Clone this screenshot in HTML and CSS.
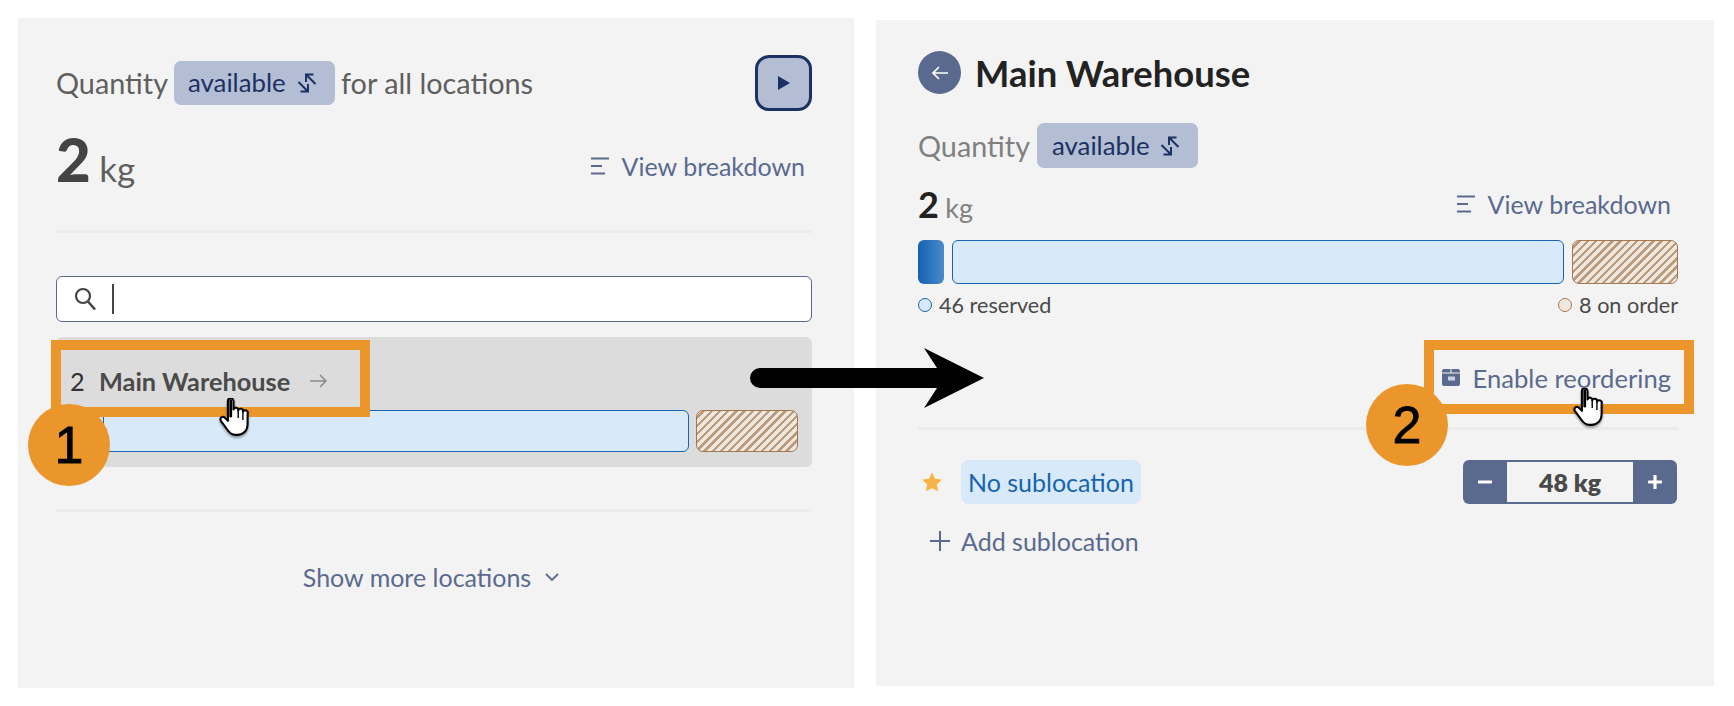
FILE: index.html
```html
<!DOCTYPE html>
<html lang="en">
<head>
<meta charset="utf-8">
<title>Main Warehouse</title>
<link rel="stylesheet" href="styles.css">
</head>
<body>
<svg class="defs" width="0" height="0" aria-hidden="true">
  <symbol id="swap" viewBox="0 0 20 20"><path d="M1.500 9 11 18.500M3.500 18.500H11V11M18.500 11 9 1.500M16.500 1.500H9V9" fill="none" stroke="currentColor" stroke-width="2"/></symbol>
  <symbol id="lines" viewBox="0 0 19 18"><path d="M0 1.500H18M0 9H11M0 16.500H14" fill="none" stroke="#5a6a8f" stroke-width="2"/></symbol>
  <symbol id="hand" viewBox="0 0 32 42">
    <path d="M9.500 3a3 3 0 0 1 6 0V12a2.500 2.500 0 0 1 5 1a2.500 2.500 0 0 1 5 1.500a2.500 2.500 0 0 1 5 2V27c0 8-5 12-11 12h-2c-5 0-7-3-9-6L2 24c-1.800-3 2-5.500 4-3.500L9.500 24Z" fill="#fff" stroke="#000" stroke-width="2.200" stroke-linejoin="round"/>
    <path d="M12.500 2.500V19" fill="none" stroke="#000" stroke-width="3" stroke-linecap="round"/>
    <path d="M20.500 13v8M25.500 15v8" fill="none" stroke="#000" stroke-width="1.500"/>
  </symbol>
</svg>

<main class="stage">
  <section class="panel panel-left">
    <div class="head">
      <div class="qty-line">
        <span class="muted-dark">Quantity</span>
        <span class="chip">available <svg class="swap"><use href="#swap"/></svg></span>
        <span class="muted-dark">for all locations</span>
      </div>
      <button class="play"><svg viewBox="0 0 12 14" class="play-icon"><path d="M0 0 12 7 0 14Z"/></svg></button>
    </div>
    <div class="stat stat-big">
      <div class="stat-value"><span class="num-heavy">2</span> <span class="unit-dark">kg</span></div>
      <a class="link"><svg class="lines"><use href="#lines"/></svg>View breakdown</a>
    </div>
    <div class="rule rule-a"></div>
    <div class="search">
      <svg class="search-icon" viewBox="0 0 22 24"><circle cx="9" cy="9" r="7" fill="none" stroke="#444" stroke-width="2.200"/><path d="M14 14.500 21 22.500" stroke="#444" stroke-width="2.500"/></svg>
      <span class="caret"></span>
    </div>
    <div class="location">
      <div class="loc-name">
        <span class="loc-num">2</span>
        <strong class="loc-title">Main Warehouse</strong>
        <svg class="loc-arrow" viewBox="0 0 17 14"><path d="M0 7H16M10 1l6 6-6 6" fill="none" stroke="#8a8a8a" stroke-width="1.500"/></svg>
      </div>
      <div class="bar bar-small">
        <span class="seg-dark"></span>
        <span class="seg-light"></span>
        <span class="seg-hatch"></span>
      </div>
    </div>
    <div class="rule rule-b"></div>
    <a class="link show-more">Show more locations <svg class="chev" viewBox="0 0 14 9"><path d="M1 1l6 6 6-6" fill="none" stroke="#5a6a8f" stroke-width="1.800"/></svg></a>
  </section>

  <section class="panel panel-right">
    <div class="title-row">
      <span class="back"><svg viewBox="0 0 16 14" class="back-icon"><path d="M16 7H1M7 1 1 7l6 6" fill="none" stroke="#fff" stroke-width="1.600"/></svg></span>
      <h1 class="title">Main Warehouse</h1>
    </div>
    <div class="qty-line qty-right">
      <span class="muted">Quantity</span>
      <span class="chip">available <svg class="swap"><use href="#swap"/></svg></span>
    </div>
    <div class="stat stat-small">
      <div><span class="num-bold">2</span> <span class="unit">kg</span></div>
      <a class="link"><svg class="lines"><use href="#lines"/></svg>View breakdown</a>
    </div>
    <div class="bar bar-large">
      <span class="seg-dark"></span>
      <span class="seg-light"></span>
      <span class="seg-hatch"></span>
    </div>
    <div class="legend">
      <span class="legend-item"><i class="dot dot-blue"></i>46 reserved</span>
      <span class="legend-item"><i class="dot dot-brown"></i>8 on order</span>
    </div>
    <div class="enable-row">
      <a class="link"><svg class="box-icon" viewBox="0 0 18 17"><path d="M2 0h6.500v3.500H0V2a2 2 0 0 1 2-2ZM9.500 0H16a2 2 0 0 1 2 2v1.500H9.500ZM0 4.500H18V15a2 2 0 0 1-2 2H2a2 2 0 0 1-2-2Z" fill="#5a6a8f"/><rect x="6" y="7.500" width="7" height="4" fill="#c9d0df"/></svg>Enable reordering</a>
    </div>
    <div class="rule rule-c"></div>
    <div class="sub-row">
      <div class="sub-left">
        <svg class="star" viewBox="0 0 24 24"><path d="M12 1.500 15.300 8.500 23 9.500 17.400 14.800 18.800 22.500 12 18.800 5.200 22.500 6.600 14.800 1 9.500 8.700 8.500Z" fill="#f6b448" stroke="#f6b448" stroke-linejoin="round"/></svg>
        <span class="sub-chip">No sublocation</span>
      </div>
      <div class="stepper">
        <span class="step-btn"><svg viewBox="0 0 14 14" class="step-icon"><path d="M1 7H13" stroke="#fff" stroke-width="3.200" stroke-linecap="round"/></svg></span>
        <span class="step-val">48 kg</span>
        <span class="step-btn"><svg viewBox="0 0 14 14" class="step-icon"><path d="M1 7H13M7 1V13" stroke="#fff" stroke-width="3.200" stroke-linecap="round"/></svg></span>
      </div>
    </div>
    <a class="link add-row"><svg class="plus" viewBox="0 0 20 20"><path d="M0 10H20M10 0V20" stroke="#5a6a8f" stroke-width="2"/></svg>Add sublocation</a>
  </section>

  <div class="mark mark-one"></div>
  <div class="mark mark-two"></div>
  <svg class="flow-arrow" viewBox="0 0 235 60"><path d="M10 20H187L174 0 234 30 174 60 187 40H10A10 10 0 0 1 10 20Z" fill="#000"/></svg>
  <div class="badge badge-one">1</div>
  <div class="badge badge-two">2</div>
  <svg class="hand hand-one"><use href="#hand"/></svg>
  <svg class="hand hand-two"><use href="#hand"/></svg>
</main>
</body>
</html>
```
FILE: styles.css
```css
* { box-sizing: border-box; }
html, body { margin: 0; padding: 0; background: #fff; }
body { width: 1734px; height: 706px; overflow: hidden; font-family: "Lato", "Liberation Sans", sans-serif; font-size: 25px; color: #4a4a4a; }
.defs { position: absolute; }
.stage { position: relative; display: flex; gap: 22px; padding: 18px 20px 18px 18px; height: 706px; align-items: stretch; }
.panel { background: #f3f3f3; display: flex; flex-direction: column; }
.panel-left { width: 836px; padding: 37px 42px 0 38px; }
.panel-right { width: 838px; margin: 2px 0; padding: 31px 36px 0 42px; }

.head { display: flex; justify-content: space-between; align-items: center; height: 56px; }
.qty-line { display: flex; align-items: center; gap: 6px; line-height: 1; font-size: 28.800px; }
.muted-dark { color: #5f5f5f; }
.muted { color: #808080; }
.chip { display: inline-flex; align-items: center; justify-content: space-between; width: 161px; height: 44px; padding: 0 18px 0 14px; background: #b3bdd3; border-radius: 7px; color: #1b3163; font-size: 25.800px; }
.swap { width: 20px; height: 20px; color: #1b3163; }
.play { width: 57px; height: 56px; padding: 0; border: 3px solid #1b3163; border-radius: 14px; background: #b3bdd3; display: flex; align-items: center; justify-content: center; }
.play-icon { width: 12px; height: 14px; fill: #1b3163; }

.stat { display: flex; justify-content: space-between; align-items: center; }
.stat-big { margin-top: 19px; height: 60px; }
.stat-value { margin-top: -2px; }
.num-heavy { font-size: 60px; font-weight: 900; color: #444; line-height: 1; margin-right: 2px; }
.unit-dark { font-size: 35px; color: #5f5f5f; }
.num-bold { font-size: 36px; font-weight: 700; color: #222; line-height: 1; }
.unit { font-size: 27px; color: #808080; }
.link { display: inline-flex; align-items: center; color: #5a6a8f; white-space: nowrap; }
.lines { width: 19px; height: 18px; margin-right: 12px; }
.stat-big .link { margin: 11px 7px 0 0; }
.stat-small .link { margin: -2px 7px 0 0; }

.rule { height: 3px; background: #ebebeb; }
.rule-a { margin-top: 40px; }
.rule-b { margin-top: 42px; }
.rule-c { margin-top: 33px; }

.search { margin-top: 43px; height: 46px; border: 1px solid #5a6a8f; border-radius: 6px; background: #fff; display: flex; align-items: center; padding-left: 17px; }
.search-icon { width: 22px; height: 24px; }
.caret { width: 2px; height: 30px; background: #444; margin-left: 16px; }

.location { margin-top: 15px; height: 130px; padding: 27px 14px 0; background: #dcdcdc; border-radius: 6px; display: flex; flex-direction: column; }
.loc-name { display: flex; align-items: center; height: 34px; font-size: 25.300px; }
.loc-num { color: #333; width: 29px; }
.loc-title { font-weight: 700; color: #4a4a4a; }
.loc-arrow { width: 17px; height: 14px; margin-left: 20px; }

.bar { display: flex; gap: 7px; }
.bar-small { margin-top: 12px; height: 42px; }
.bar-large { margin-top: 19px; height: 44px; gap: 8px; }
.seg-dark { width: 26px; border-radius: 6px; background: linear-gradient(90deg, #1560b0, #4a8ccb); }
.seg-light { flex: 1; background: #d8e9f9; border: 1px solid #1565b0; border-radius: 6px; }
.seg-hatch { width: 102px; border: 1px solid #a5774f; border-radius: 7px; background: repeating-linear-gradient(135deg, #efe8e0 0 3.500px, #bd9b7d 3.500px 5.800px); }
.bar-large .seg-hatch { width: 106px; }

.show-more { margin-top: 47px; height: 36px; justify-content: center; align-self: stretch; padding-right: 6px; }
.chev { width: 14px; height: 9px; margin-left: 14px; }

.title-row { display: flex; align-items: center; height: 43px; gap: 14px; }
.back { width: 43px; height: 43px; border-radius: 50%; background: #5a6a8f; display: flex; align-items: center; justify-content: center; }
.back-icon { width: 16px; height: 14px; }
.title { margin: 2px 0 0; font-size: 36.400px; font-weight: 700; color: #222; line-height: 1; }
.qty-right { margin-top: 29px; height: 45px; gap: 7px; }
.qty-right .muted { margin-top: 1px; }
.qty-right .chip { height: 45px; padding-left: 15px; }
.stat-small { margin-top: 21px; height: 32px; }

.legend { margin-top: 10px; height: 22px; display: flex; justify-content: space-between; font-size: 21.600px; color: #4a4a4a; }
.legend-item { display: inline-flex; align-items: center; }
.dot { width: 14px; height: 14px; border-radius: 50%; margin-right: 7px; border: 1.500px solid; }
.dot-blue { border-color: #1565b0; background: #d8e9f9; }
.dot-brown { border-color: #a5774f; background: #efe8e0; }

.enable-row { margin-top: 46px; height: 32px; display: flex; justify-content: flex-end; padding-right: 7px; font-size: 25.600px; }
.box-icon { width: 18px; height: 17px; margin: -2px 13px 0 0; }

.sub-row { margin-top: 30px; height: 44px; display: flex; justify-content: space-between; padding-right: 1px; }
.sub-left { display: flex; align-items: center; }
.star { width: 20px; height: 20px; margin: 0 0 0 4px; }
.sub-chip { margin-left: 19px; height: 44px; padding: 0 7px; display: flex; align-items: center; background: #d8e9f9; color: #1565b0; border-radius: 8px; }
.stepper { display: flex; width: 214px; height: 44px; border-radius: 6px; overflow: hidden; background: #5a6a8f; }
.step-btn { width: 44px; display: flex; align-items: center; justify-content: center; }
.step-icon { width: 14px; height: 14px; }
.step-val { flex: 1; margin: 2px 0; background: #f3f3f3; font-weight: 800; color: #4a4a4a; display: flex; align-items: center; justify-content: center; }
.add-row { margin-top: 21px; height: 32px; padding-left: 12px; }
.plus { width: 20px; height: 20px; margin-right: 11px; }

.mark { position: absolute; border: 10px solid #ea962a; }
.mark-one { left: 51px; top: 340px; width: 319px; height: 77px; }
.mark-two { left: 1424px; top: 340px; width: 270px; height: 74px; }
.flow-arrow { position: absolute; left: 750px; top: 348px; width: 235px; height: 60px; }
.badge { position: absolute; width: 82px; height: 82px; border-radius: 50%; background: #ea962a; color: #000; font-family: "Liberation Sans", Arial, sans-serif; font-size: 52px; -webkit-text-stroke: 0.800px #000; display: flex; align-items: center; justify-content: center; }
.badge-one { left: 28px; top: 404px; }
.badge-two { left: 1366px; top: 384px; }
.hand { position: absolute; width: 30px; height: 40px; filter: drop-shadow(0 2px 1px rgba(0,0,0,.35)); }
.hand-one { left: 219px; top: 398px; }
.hand-two { left: 1573px; top: 388px; }
```
